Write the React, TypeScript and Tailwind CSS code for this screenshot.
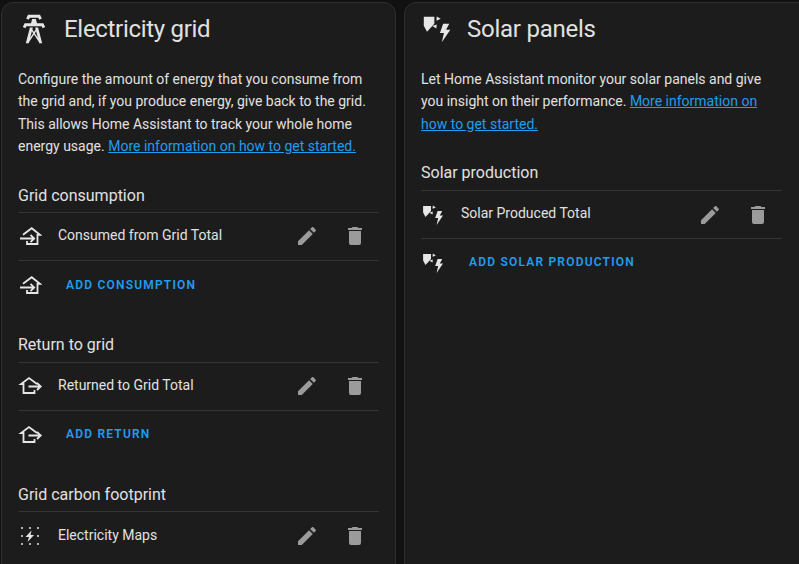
const pencil = "M20.71,7.04C21.1,6.65 21.1,6 20.71,5.63L18.37,3.29C18,2.9 17.35,2.9 16.96,3.29L15.12,5.12L18.87,8.87M3,17.25V21H6.75L17.81,9.93L14.06,6.18L3,17.25Z";
const trash = "M19,4H15.5L14.5,3H9.5L8.5,4H5V6H19M6,19A2,2 0 0,0 8,21H16A2,2 0 0,0 18,19V7H6V19Z";
const tower = "M8.28,5.45L6.5,4.55L7.76,2H16.23L17.5,4.55L15.72,5.44L15,4H9L8.28,5.45M18.62,8H14.09L13.3,5H10.7L9.91,8H5.38L4.1,10.55L5.89,11.44L6.62,10H17.38L18.1,11.45L19.89,10.56L18.62,8M17.77,22H15.7L15.46,21.1L12,15.9L8.53,21.1L8.3,22H6.23L9.12,11H11.19L10.83,12.35L12,14.1L13.16,12.35L12.81,11H14.88L17.77,22M11.4,15L10.5,13.65L9.32,18.13L11.4,15M14.68,18.12L13.5,13.64L12.6,15L14.68,18.12Z";
const solar = "M2.1 2.9H10V8L4.5 14L2.1 9.5ZM11.8 2.6L14.8 4.4L11.6 5.8L11.8 2.6ZM8.5 9.8L11.8 8.6L11.5 11.6L8.5 9.8ZM16.6 8L14.2 15H17.2L15.6 22L22 12.6H18.8L21.2 8H16.6Z";
const maps = "M13.5 6.5L7.5 13H11L9.5 18L16 11H12.5L13.5 6.5ZM4 3A1 1 0 1 1 4 5A1 1 0 1 1 4 3ZM12 3A1 1 0 1 1 12 5A1 1 0 1 1 12 3ZM20 3A1 1 0 1 1 20 5A1 1 0 1 1 20 3ZM4 11A1 1 0 1 1 4 13A1 1 0 1 1 4 11ZM20 11A1 1 0 1 1 20 13A1 1 0 1 1 20 11ZM4 19A1 1 0 1 1 4 21A1 1 0 1 1 4 19ZM12 19A1 1 0 1 1 12 21A1 1 0 1 1 12 19ZM20 19A1 1 0 1 1 20 21A1 1 0 1 1 20 19Z";

function Icon({ d, className }: { d: string; className: string }) {
  return (
    <svg viewBox="0 0 24 24" className={className} fill="currentColor" aria-hidden="true">
      <path d={d} />
    </svg>
  );
}

function HomeImport() {
  return (
    <svg viewBox="0 0 24 24" className="h-6 w-6 shrink-0 text-[#e6e6e6]" fill="none" stroke="currentColor" strokeWidth="1.8" aria-hidden="true">
      <path d="M9 17V20H19.5V10.8H22L13.7 4.2L5 10.8" />
      <path d="M2 14.5H16M12.5 10.8L16.2 14.5L12.5 18.2" />
    </svg>
  );
}

function HomeExport() {
  return (
    <svg viewBox="0 0 24 24" className="h-6 w-6 shrink-0 text-[#e6e6e6]" fill="none" stroke="currentColor" strokeWidth="1.8" aria-hidden="true">
      <path d="M16.5 16V19H5.5V10H3L11 4L19 10" />
      <path d="M10.5 12.5H22.5M19 9L22.7 12.5L19 16" />
    </svg>
  );
}

type Glyph = { d?: string; node?: "import" | "export" };

function RowIcon({ g }: { g: Glyph }) {
  if (g.node === "import") return <HomeImport />;
  if (g.node === "export") return <HomeExport />;
  return <Icon d={g.d!} className="h-6 w-6 shrink-0 text-[#e6e6e6]" />;
}

function Row({ icon, label, textClass = "pb-[3px]", rowClass = "border-b border-[#353535]" }: { icon: Glyph; label: string; textClass?: string; rowClass?: string }) {
  return (
    <div className={`flex h-12 items-center ${rowClass}`}>
      <RowIcon g={icon} />
      <span className={`ml-4 flex-1 text-sm text-[#e1e1e1] ${textClass}`}>{label}</span>
      <Icon d={pencil} className="mr-6 h-6 w-6 text-[#9b9b9b]" />
      <Icon d={trash} className="mr-3 h-6 w-6 text-[#9b9b9b]" />
    </div>
  );
}

function AddRow({ icon, label, textClass = "" }: { icon: Glyph; label: string; textClass?: string }) {
  return (
    <div className="flex h-12 items-center">
      <RowIcon g={icon} />
      <span className={`ml-6 text-xs font-semibold tracking-[1.2px] text-[#209df0] ${textClass}`}>{label}</span>
    </div>
  );
}

function Section({ title, className, headClass, children }: { title: string; className: string; headClass: string; children: React.ReactNode }) {
  return (
    <section className={className}>
      <h3 className={`box-content border-b border-[#353535] pb-[1px] text-base leading-6 text-[#e1e1e1] ${headClass}`}>{title}</h3>
      {children}
    </section>
  );
}

function Link({ children }: { children: React.ReactNode }) {
  return <a className="text-[#209df0] underline">{children}</a>;
}

export default function App() {
  return (
    <div className="flex h-[564px] w-[799px] gap-2 overflow-hidden bg-[#111111] pl-px pt-0.5 font-['Roboto',sans-serif]">
      <div className="h-[640px] w-[395px] shrink-0 rounded-xl border border-[#2f2f2f] bg-[#1c1c1c] px-4">
        <div className="flex h-[51px] items-center">
          <Icon d={tower} className="-ml-px h-[34px] w-[34px] shrink-0 text-[#e6e6e6]" />
          <h2 className="ml-[13px] text-2xl font-normal tracking-[-0.3px] text-[#e1e1e1]">Electricity grid</h2>
        </div>
        <p className="mt-[14px] text-sm leading-[22.4px] text-[#e1e1e1]">
          Configure the amount of energy that you consume from the grid and, if you produce energy, give back to the grid. This allows Home Assistant to track your whole home energy usage. <Link>More information on how to get started.</Link>
        </p>
        <Section title="Grid consumption" className="mt-[26px]" headClass="h-[27px]">
          <Row icon={{ node: "import" }} label="Consumed from Grid Total" />
          <AddRow icon={{ node: "import" }} label="ADD CONSUMPTION" />
        </Section>
        <Section title="Return to grid" className="mt-[24px]" headClass="h-[28px]">
          <Row icon={{ node: "export" }} label="Returned to Grid Total" />
          <AddRow icon={{ node: "export" }} label="ADD RETURN" textClass="pb-[2px]" />
        </Section>
        <Section title="Grid carbon footprint" className="mt-[24px]" headClass="h-[27px]">
          <Row icon={{ d: maps }} label="Electricity Maps" textClass="pb-[1px]" rowClass="" />
        </Section>
      </div>
      <div className="h-[640px] w-[420px] shrink-0 rounded-xl border border-[#2f2f2f] bg-[#1c1c1c] px-4">
        <div className="flex h-[51px] items-center">
          <Icon d={solar} className="h-[32px] w-[32px] shrink-0 text-[#e6e6e6]" />
          <h2 className="ml-[14px] text-2xl font-normal tracking-[-0.25px] text-[#e1e1e1]">Solar panels</h2>
        </div>
        <p className="mt-[14px] w-[362px] text-sm leading-[22.4px] text-[#e1e1e1]">
          Let Home Assistant monitor your solar panels and give you insight on their performance. <Link>More information on how to get started.</Link>
        </p>
        <Section title="Solar production" className="mt-[26px] w-[361px]" headClass="h-[28px]">
          <Row icon={{ d: solar }} label="Solar Produced Total" />
          <AddRow icon={{ d: solar }} label="ADD SOLAR PRODUCTION" textClass="pb-[2px]" />
        </Section>
      </div>
    </div>
  );
}
